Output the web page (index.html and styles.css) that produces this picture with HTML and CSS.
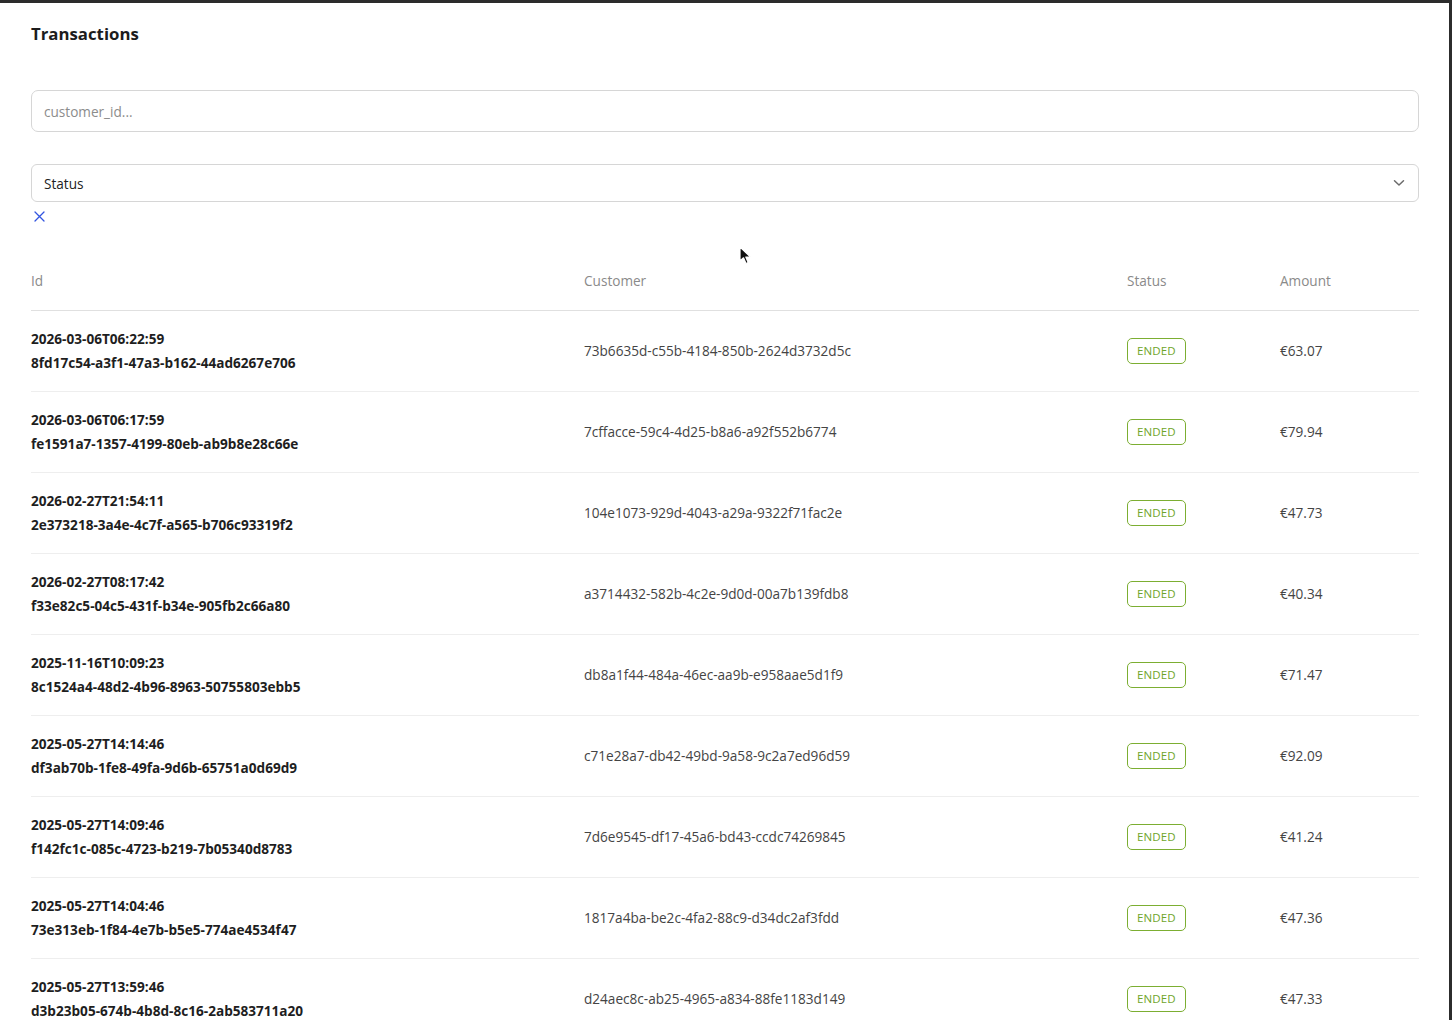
FILE: index.html
```html
<!DOCTYPE html>
<html lang="en">
<head>
<meta charset="utf-8">
<title>Transactions</title>
<link rel="stylesheet" href="styles.css">
</head>
<body>
<div class="page">
  <h1 class="title">Transactions</h1>
  <div class="field">
    <input class="text-input" type="text" placeholder="customer_id...">
  </div>
  <div class="select">
    <span class="select-value">Status</span>
    <svg class="chevron" width="12" height="8" viewBox="0 0 12 8"><path d="M1.5 1.8 L6 6 L10.5 1.8" fill="none" stroke="#6b6b6b" stroke-width="1.5" stroke-linecap="round" stroke-linejoin="round"/></svg>
  </div>
  <div class="clear">
    <svg width="11" height="11" viewBox="0 0 11 11"><path d="M1 1 L10 10 M10 1 L1 10" stroke="#3355e0" stroke-width="1.3" stroke-linecap="round"/></svg>
  </div>

  <table class="table">
    <colgroup>
      <col class="c-id"><col class="c-cust"><col class="c-status"><col class="c-amount">
    </colgroup>
    <thead>
      <tr><th>Id</th><th>Customer</th><th>Status</th><th>Amount</th></tr>
    </thead>
    <tbody>
      <tr><td class="id"><div>2026-03-06T06:22:59</div><div>8fd17c54-a3f1-47a3-b162-44ad6267e706</div></td><td class="cust">73b6635d-c55b-4184-850b-2624d3732d5c</td><td><span class="badge">ENDED</span></td><td class="amt">€63.07</td></tr>
      <tr><td class="id"><div>2026-03-06T06:17:59</div><div>fe1591a7-1357-4199-80eb-ab9b8e28c66e</div></td><td class="cust">7cffacce-59c4-4d25-b8a6-a92f552b6774</td><td><span class="badge">ENDED</span></td><td class="amt">€79.94</td></tr>
      <tr><td class="id"><div>2026-02-27T21:54:11</div><div>2e373218-3a4e-4c7f-a565-b706c93319f2</div></td><td class="cust">104e1073-929d-4043-a29a-9322f71fac2e</td><td><span class="badge">ENDED</span></td><td class="amt">€47.73</td></tr>
      <tr><td class="id"><div>2026-02-27T08:17:42</div><div>f33e82c5-04c5-431f-b34e-905fb2c66a80</div></td><td class="cust">a3714432-582b-4c2e-9d0d-00a7b139fdb8</td><td><span class="badge">ENDED</span></td><td class="amt">€40.34</td></tr>
      <tr><td class="id"><div>2025-11-16T10:09:23</div><div>8c1524a4-48d2-4b96-8963-50755803ebb5</div></td><td class="cust">db8a1f44-484a-46ec-aa9b-e958aae5d1f9</td><td><span class="badge">ENDED</span></td><td class="amt">€71.47</td></tr>
      <tr><td class="id"><div>2025-05-27T14:14:46</div><div>df3ab70b-1fe8-49fa-9d6b-65751a0d69d9</div></td><td class="cust">c71e28a7-db42-49bd-9a58-9c2a7ed96d59</td><td><span class="badge">ENDED</span></td><td class="amt">€92.09</td></tr>
      <tr><td class="id"><div>2025-05-27T14:09:46</div><div>f142fc1c-085c-4723-b219-7b05340d8783</div></td><td class="cust">7d6e9545-df17-45a6-bd43-ccdc74269845</td><td><span class="badge">ENDED</span></td><td class="amt">€41.24</td></tr>
      <tr><td class="id"><div>2025-05-27T14:04:46</div><div>73e313eb-1f84-4e7b-b5e5-774ae4534f47</div></td><td class="cust">1817a4ba-be2c-4fa2-88c9-d34dc2af3fdd</td><td><span class="badge">ENDED</span></td><td class="amt">€47.36</td></tr>
      <tr><td class="id"><div>2025-05-27T13:59:46</div><div>d3b23b05-674b-4b8d-8c16-2ab583711a20</div></td><td class="cust">d24aec8c-ab25-4965-a834-88fe1183d149</td><td><span class="badge">ENDED</span></td><td class="amt">€47.33</td></tr>
    </tbody>
  </table>
</div>
<svg class="cursor" width="14" height="20" viewBox="0 0 14 20"><path d="M1 1 L1 15 L4.5 11.8 L7 17.5 L9.2 16.5 L6.8 11 L11.5 11 Z" fill="#111" stroke="#fff" stroke-width="1.2" stroke-linejoin="round"/></svg>
</body>
</html>
```

FILE: styles.css
```css
* { box-sizing: border-box; }

html, body {
  margin: 0;
  padding: 0;
  background: #ffffff;
}

body {
  height: 1020px;
  overflow: hidden;
  border-top: 3px solid #2c2c2c;
  border-right: 3px solid #2c2c2c;
  font-family: "Open Sans", "Noto Sans", sans-serif;
  font-size: 13.6px;
  color: #333;
  position: relative;
}

.page {
  padding: 0 30px 0 31px;
}

.title {
  margin: 0;
  padding-top: 19px;
  font-size: 16.8px;
  line-height: 24px;
  font-weight: 700;
  color: #1c1c1c;
}

.field {
  margin-top: 44px;
}

.text-input {
  display: block;
  width: 100%;
  height: 42px;
  border: 1px solid #d6d6d6;
  border-radius: 7px;
  padding: 0 12px;
  font-family: inherit;
  font-size: 13.6px;
  color: #333;
  outline: none;
  background: #fff;
}

.text-input::placeholder {
  color: #8c8c8c;
}

.select {
  margin-top: 32px;
  height: 38px;
  border: 1px solid #d6d6d6;
  border-radius: 6px;
  display: flex;
  align-items: center;
  justify-content: space-between;
  padding: 0 13px 0 12px;
  color: #222;
}

.chevron {
  display: block;
}

.clear {
  margin-top: 8px;
  padding-left: 3px;
  height: 12px;
  display: flex;
  align-items: center;
}

.table {
  width: 100%;
  border-collapse: collapse;
  table-layout: fixed;
  margin-top: 30px;
}

.c-id { width: 553px; }
.c-cust { width: 543px; }
.c-status { width: 153px; }
.c-amount { width: 139px; }

.table th {
  text-align: left;
  font-weight: 400;
  color: #8a8a8a;
  height: 58px;
  padding: 0;
  border-bottom: 1px solid #e0e0e0;
  vertical-align: middle;
}

.table td {
  height: 81px;
  padding: 0;
  border-bottom: 1px solid #eeeeee;
  vertical-align: middle;
}

.id {
  font-weight: 700;
  color: #1e1e1e;
  line-height: 24px;
}

.cust {
  color: #444;
}

.amt {
  color: #444;
}

.badge {
  display: inline-block;
  height: 26px;
  line-height: 24px;
  padding: 0 9px;
  border: 1px solid #7cae32;
  border-radius: 5px;
  color: #6ea42a;
  font-size: 11.5px;
  font-weight: 500;
  letter-spacing: 0.1px;
}

.cursor {
  position: absolute;
  left: 739px;
  top: 243px;
}
```
